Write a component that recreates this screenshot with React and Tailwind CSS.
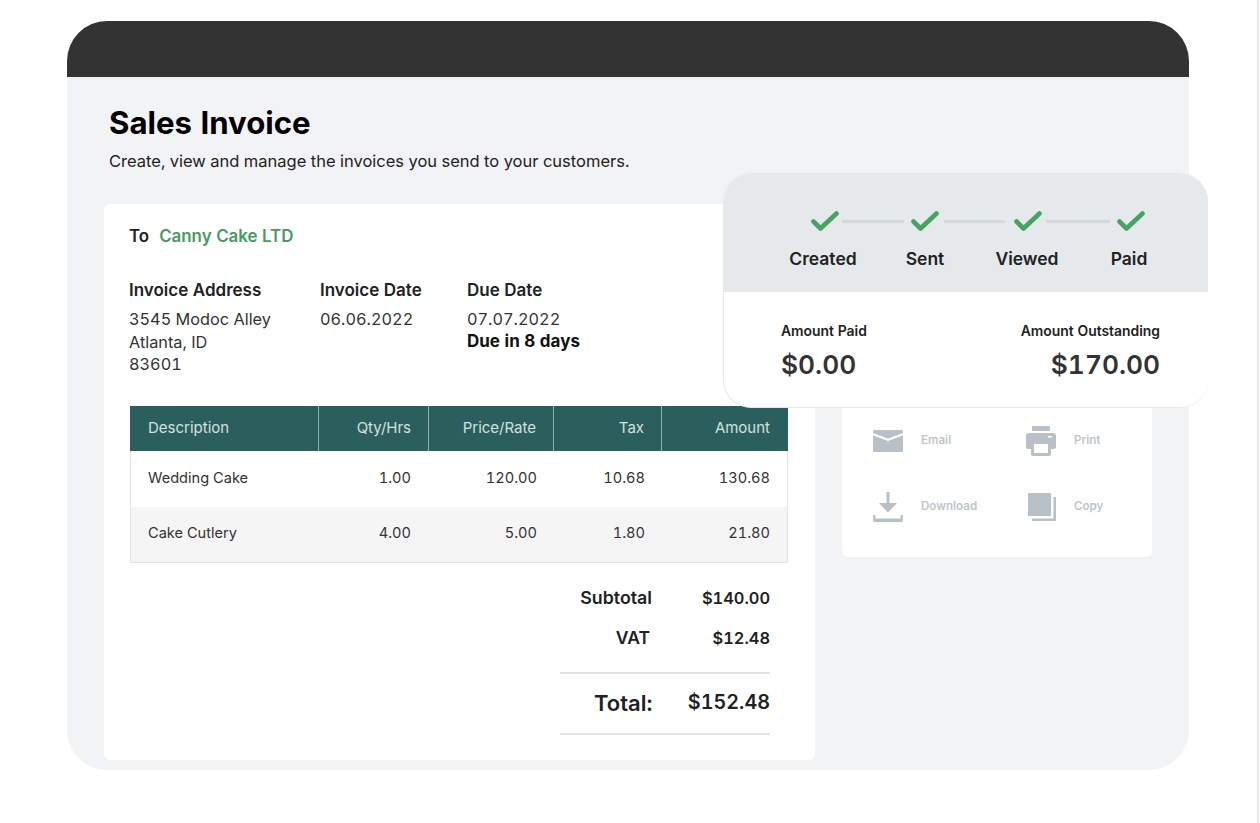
import { Fragment } from 'react'

const font = { fontFamily: 'Inter, "Noto Sans", sans-serif' }

const steps = [
  { label: 'Created', line: 'ml-[3px] mr-[7px] w-[62px]' },
  { label: 'Sent', line: 'ml-[5px] mr-[9px] w-[61px]' },
  { label: 'Viewed', line: 'ml-[4px] mr-[7px] w-[64px]' },
  { label: 'Paid' },
]

const rows = [
  { name: 'Wedding Cake', qty: '1.00', price: '120.00', tax: '10.68', amount: '130.68', bg: 'bg-white', height: 'h-[56px]' },
  { name: 'Cake Cutlery', qty: '4.00', price: '5.00', tax: '1.80', amount: '21.80', bg: 'bg-[#f5f5f5]', height: 'h-[55px]' },
]

function Check() {
  return (
    <svg viewBox="0 0 28 24" className="w-7 h-6 shrink-0">
      <path d="M2.5 12.5 L9.5 19.5 L25.5 4.5" fill="none" stroke="#46a463" strokeWidth="4.6" strokeLinecap="round" strokeLinejoin="round" />
    </svg>
  )
}

function EmailIcon() {
  return (
    <svg viewBox="0 0 30 22" className="w-[30px] h-[22px]" fill="#b7c1c7">
      <path d="M1.5 0h27A1.5 1.5 0 0 1 30 1.5V3L15 8.5 0 3V1.5A1.5 1.5 0 0 1 1.5 0z" />
      <path d="M0 5.5l15 5.5 15-5.5v15a1.5 1.5 0 0 1-1.5 1.5h-27A1.5 1.5 0 0 1 0 20.5z" />
    </svg>
  )
}

function PrintIcon() {
  return (
    <svg viewBox="0 0 30 30" className="w-[30px] h-[30px]" fill="#b7c1c7">
      <rect x="6" y="0" width="18" height="5" rx="0.5" />
      <path fillRule="evenodd" d="M3 7h24a3 3 0 0 1 3 3v11a2 2 0 0 1-2 2h-3v5a2 2 0 0 1-2 2H7a2 2 0 0 1-2-2v-5H2a2 2 0 0 1-2-2V10a3 3 0 0 1 3-3zM8 18v9h14v-9z" />
      <rect x="22" y="10" width="4" height="1.6" fill="#fff" />
    </svg>
  )
}

function DownloadIcon() {
  return (
    <svg viewBox="0 0 30 30" className="w-[30px] h-[30px]" fill="#b7c1c7">
      <path d="M13.5 0h3v11h7.5l-9 9.5-9-9.5h7.5z" />
      <path d="M0 23h2.5v3.5h25V23H30v5a2 2 0 0 1-2 2H2a2 2 0 0 1-2-2z" />
    </svg>
  )
}

function CopyIcon() {
  return (
    <svg viewBox="0 0 30 30" className="w-[30px] h-[30px]" fill="#b7c1c7">
      <rect x="2" y="1" width="23" height="23" rx="0.5" />
      <path d="M27.5 5H30v24H6v-2.5h21.5z" />
    </svg>
  )
}

function Action({ icon, label }) {
  return (
    <div className="flex items-center gap-[18px] h-10">
      <div className="w-[30px] flex justify-center">{icon}</div>
      <span className="text-[11.6px] font-semibold text-[#bdc6cb]">{label}</span>
    </div>
  )
}

function StatusCard() {
  return (
    <div className="absolute left-[656px] top-[96px] w-[485px] h-[235px] rounded-[28px] overflow-hidden bg-white border border-r-0 border-[#e6e9ec]">
      <div className="h-[118px] bg-[#e6e9ec] pt-[35px]">
        <div className="flex items-center pl-[87px]">
          {steps.map(step => (
            <Fragment key={step.label}>
              <Check />
              {step.line && <div className={`h-[3px] bg-[#d3d8db] ${step.line}`} />}
            </Fragment>
          ))}
        </div>
        <div className="grid grid-cols-4 w-[408px] ml-[48px] mt-[14px]">
          {steps.map(step => (
            <span key={step.label} className="text-center text-[17.5px] leading-6 font-semibold text-[#222]">{step.label}</span>
          ))}
        </div>
      </div>
      <div className="flex justify-between pl-[57px] pr-[48px] pt-[31px]">
        <div>
          <div className="text-[13.9px] leading-4 font-semibold text-[#222]">Amount Paid</div>
          <div className="text-[26.3px] leading-8 mt-[10px] font-semibold text-[#333]">$0.00</div>
        </div>
        <div className="text-right">
          <div className="text-[13.9px] leading-4 font-semibold text-[#222]">Amount Outstanding</div>
          <div className="text-[26.3px] leading-8 mt-[10px] font-semibold text-[#333]">$170.00</div>
        </div>
      </div>
    </div>
  )
}

function InvoiceTable() {
  return (
    <div className="mt-[30px] ml-[26px] w-[658px] border-b border-x border-[#dfe3e6]">
      <div className="grid grid-cols-[189px_110px_125px_108px_1fr] h-[45px] -mx-px bg-[#2a5f5e] text-[15px] text-[#d5e0df] items-center">
        <div className="h-full flex items-center pl-[18px] border-r border-[#8fb0ae]">Description</div>
        <div className="h-full flex items-center justify-end pr-[17px] border-r border-[#8fb0ae]">Qty/Hrs</div>
        <div className="h-full flex items-center justify-end pr-[17px] border-r border-[#8fb0ae]">Price/Rate</div>
        <div className="h-full flex items-center justify-end pr-[17px] border-r border-[#8fb0ae]">Tax</div>
        <div className="h-full flex items-center justify-end pr-[18px]">Amount</div>
      </div>
      {rows.map(row => (
        <div key={row.name} className={`grid grid-cols-[187px_110px_125px_108px_1fr] items-center text-[14.6px] text-[#333] ${row.height} ${row.bg}`}>
          <div className="pl-[17px]">{row.name}</div>
          <div className="text-right pr-[17px]">{row.qty}</div>
          <div className="text-right pr-[16px]">{row.price}</div>
          <div className="text-right pr-[16px]">{row.tax}</div>
          <div className="text-right pr-[17px]">{row.amount}</div>
        </div>
      ))}
    </div>
  )
}

function Totals() {
  return (
    <div className="ml-[456px] w-[210px] mt-[16px] font-semibold text-[#222]">
      <div className="flex justify-between items-center h-10">
        <span className="ml-[20px] w-[72px] text-right whitespace-nowrap text-[17.8px]">Subtotal</span>
        <span className="text-[16.4px]">$140.00</span>
      </div>
      <div className="flex justify-between items-center h-[39px]">
        <span className="ml-[20px] w-[70px] text-right text-[17.5px]">VAT</span>
        <span className="text-[16.4px]">$12.48</span>
      </div>
      <div className="mt-[14px] border-y-2 border-[#dfe4e8] h-[63px] flex justify-between items-center">
        <span className="ml-[34px] text-[22px]">Total:</span>
        <span className="text-[19.8px]">$152.48</span>
      </div>
    </div>
  )
}

export default function App() {
  return (
    <div style={font} className="w-[1259px] h-[823px] bg-white border-r-2 border-[#e8e8e8] overflow-hidden pt-[21px] pl-[67px] tabular-nums">
      <div className="w-[1122px]">
        <div className="h-[56px] bg-[#333333] rounded-t-[40px]" />
        <div className="relative h-[693px] bg-[#f2f3f5] rounded-b-[40px] pl-[37px]">
          <div className="pl-[5px] pt-[26px]">
            <h1 className="text-[31.2px] leading-10 font-bold text-black">Sales Invoice</h1>
            <p className="text-[16.5px] leading-6 mt-[6px] text-[#222]">Create, view and manage the invoices you send to your customers.</p>
          </div>
          <div className="flex gap-[27px] mt-[31px] items-start">
            <div className="w-[711px] h-[556px] bg-white rounded-md pt-[20px]">
              <div className="pl-[25px] flex gap-[10px] text-[16.9px] leading-6 font-semibold">
                <span className="text-[#222]">To</span>
                <span className="text-[#4a9a64]">Canny Cake LTD</span>
              </div>
              <div className="pl-[25px] mt-[30px] grid grid-cols-[191px_147px_1fr] text-[16.3px] text-[#333]">
                <div>
                  <div className="text-[17px] font-semibold leading-6 text-[#222]">Invoice Address</div>
                  <div className="mt-[6px] leading-[22.5px]">3545 Modoc Alley<br />Atlanta, ID<br />83601</div>
                </div>
                <div>
                  <div className="text-[17px] font-semibold leading-6 text-[#222]">Invoice Date</div>
                  <div className="mt-[6px] leading-[22.5px]">06.06.2022</div>
                </div>
                <div>
                  <div className="text-[17px] font-semibold leading-6 text-[#222]">Due Date</div>
                  <div className="mt-[6px] leading-[22.5px]">07.07.2022</div>
                  <div className="text-[17px] font-bold leading-[21px] text-[#111]">Due in 8 days</div>
                </div>
              </div>
              <InvoiceTable />
              <Totals />
            </div>
            <div className="w-[310px] h-[353px] bg-white rounded-md flex flex-col justify-end pl-[31px] pb-[30px]">
              <div className="grid grid-cols-[153px_1fr] gap-y-[26px]">
                <Action icon={<EmailIcon />} label="Email" />
                <Action icon={<PrintIcon />} label="Print" />
                <Action icon={<DownloadIcon />} label="Download" />
                <Action icon={<CopyIcon />} label="Copy" />
              </div>
            </div>
          </div>
          <StatusCard />
        </div>
      </div>
    </div>
  )
}
